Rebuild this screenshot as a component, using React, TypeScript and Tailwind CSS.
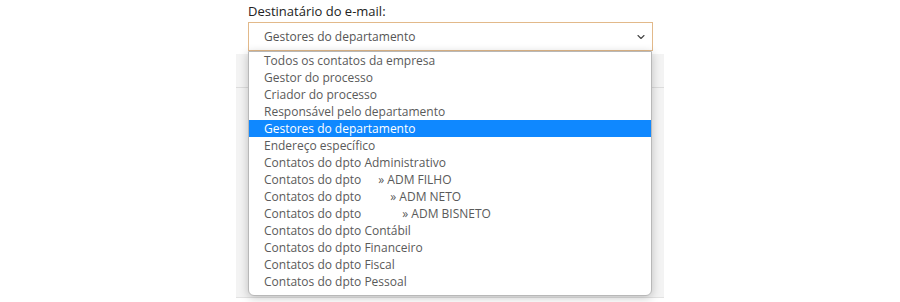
import { ChevronDown } from 'lucide-react';

const options: { label: string; indent?: string }[] = [
  { label: 'Todos os contatos da empresa' },
  { label: 'Gestor do processo' },
  { label: 'Criador do processo' },
  { label: 'Responsável pelo departamento' },
  { label: 'Gestores do departamento' },
  { label: 'Endereço específico' },
  { label: 'Contatos do dpto Administrativo' },
  { label: 'Contatos do dpto', indent: 'ml-[17px]' },
  { label: 'Contatos do dpto', indent: 'ml-[29px]' },
  { label: 'Contatos do dpto', indent: 'ml-[41px]' },
  { label: 'Contatos do dpto Contábil' },
  { label: 'Contatos do dpto Financeiro' },
  { label: 'Contatos do dpto Fiscal' },
  { label: 'Contatos do dpto Pessoal' },
];

const subs = ['» ADM FILHO', '» ADM NETO', '» ADM BISNETO'];

export default function App() {
  const selected = 'Gestores do departamento';
  let sub = 0;

  return (
    <div
      className="w-[900px] h-[302px] bg-white overflow-hidden relative"
      style={{ fontFamily: '"Open Sans", "Noto Sans", sans-serif' }}
    >
      {/* panel behind the open list */}
      <div className="absolute left-[236px] top-[54px] w-[428px] h-[244px] bg-[#f3f3f3] border-b border-[#e2e2e2]">
        <div className="mt-[33px] h-px bg-[#dcdcdc]" />
      </div>

      <div className="relative ml-[248px] w-[405px] pt-[2px]">
        <p className="text-[13px] leading-[18px] text-[#222]">Destinatário do e-mail:</p>

        <div className="mt-[2px] h-[29px] border border-[#e2b98a] bg-white flex items-center pl-[15px] pr-[5px]">
          <span className="flex-1 text-[12px] text-[#555]">{selected}</span>
          <ChevronDown size={12} strokeWidth={2.2} className="text-[#444]" />
        </div>

        <ul className="mt-0 mr-px bg-white border border-[#b8b8b8] rounded-b-[6px] pb-[5px] shadow-[0_2px_10px_rgba(0,0,0,0.22)]">
          {options.map((o, i) => {
            const active = o.label === selected;
            return (
              <li
                key={i}
                className={`h-[17px] flex items-center pl-[15px] text-[12px] leading-[17px] ${
                  active ? 'bg-[#0f88ff] text-white' : 'text-[#5a5a5a]'
                }`}
              >
                <span>{o.label}</span>
                {o.indent && <span className={o.indent}>{subs[sub++]}</span>}
              </li>
            );
          })}
        </ul>
      </div>
    </div>
  );
}
